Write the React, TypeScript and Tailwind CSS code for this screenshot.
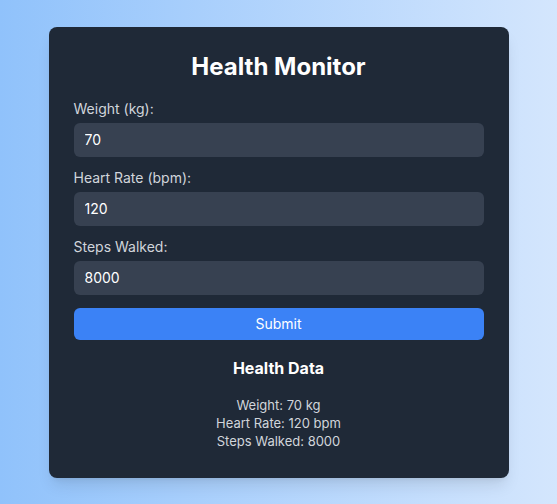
import { useState } from "react";

export default function App() {
  const [weight, setWeight] = useState("70");
  const [heartRate, setHeartRate] = useState("120");
  const [steps, setSteps] = useState("8000");
  const [data, setData] = useState({ weight: "70", heartRate: "120", steps: "8000" });

  function handleSubmit(e: React.FormEvent) {
    e.preventDefault();
    setData({ weight, heartRate, steps });
  }

  const fields = [
    { label: "Weight (kg):", value: weight, set: setWeight },
    { label: "Heart Rate (bpm):", value: heartRate, set: setHeartRate },
    { label: "Steps Walked:", value: steps, set: setSteps },
  ];

  return (
    <main
      style={{ fontFamily: "Inter, 'Noto Sans', sans-serif" }}
      className="min-h-screen flex items-center justify-center bg-gradient-to-r from-[#90c2fb] to-[#d4e6fd]"
    >
      <div className="w-[460px] rounded-lg bg-[#1f2937] px-[25px] pt-6 pb-[28px] shadow-lg">
        <h1 className="text-2xl font-bold text-white text-center mb-4">Health Monitor</h1>

        <form onSubmit={handleSubmit}>
          {fields.map((f) => (
            <div key={f.label} className="mb-[11px]">
              <label className="block text-sm text-[#d1d5db] mb-1">{f.label}</label>
              <input
                type="text"
                value={f.value}
                onChange={(e) => f.set(e.target.value)}
                className="w-full h-[34px] rounded-md bg-[#374151] px-[11px] text-sm text-white outline-none"
              />
            </div>
          ))}
          <button
            type="submit"
            className="mt-[2px] w-full h-8 rounded-md bg-[#3b82f6] text-sm text-white"
          >
            Submit
          </button>
        </form>

        {/* 結果 */}
        <div className="mt-4 text-center">
          <h2 className="text-base font-bold text-white">Health Data</h2>
          <div className="mt-4 text-[13px] leading-[18px] text-[#d1d5db]">
            <p>Weight: {data.weight} kg</p>
            <p>Heart Rate: {data.heartRate} bpm</p>
            <p>Steps Walked: {data.steps}</p>
          </div>
        </div>
      </div>
    </main>
  );
}
